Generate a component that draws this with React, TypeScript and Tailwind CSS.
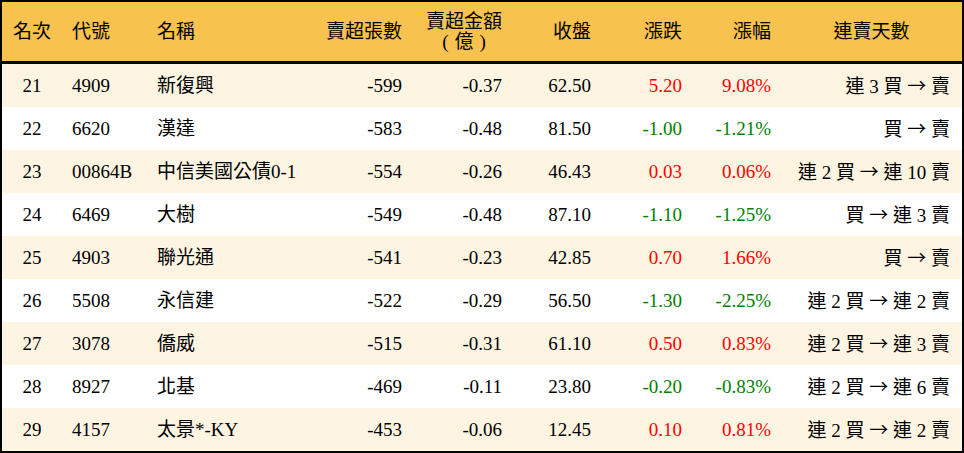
type Row = {
  rank: number;
  code: string;
  name: string;
  shares: string;
  amount: string;
  close: string;
  change: string;
  pct: string;
  streak: string;
};

const rows: Row[] = [
  { rank: 21, code: "4909", name: "新復興", shares: "-599", amount: "-0.37", close: "62.50", change: "5.20", pct: "9.08%", streak: "連 3 買 → 賣" },
  { rank: 22, code: "6620", name: "漢達", shares: "-583", amount: "-0.48", close: "81.50", change: "-1.00", pct: "-1.21%", streak: "買 → 賣" },
  { rank: 23, code: "00864B", name: "中信美國公債0-1", shares: "-554", amount: "-0.26", close: "46.43", change: "0.03", pct: "0.06%", streak: "連 2 買 → 連 10 賣" },
  { rank: 24, code: "6469", name: "大樹", shares: "-549", amount: "-0.48", close: "87.10", change: "-1.10", pct: "-1.25%", streak: "買 → 連 3 賣" },
  { rank: 25, code: "4903", name: "聯光通", shares: "-541", amount: "-0.23", close: "42.85", change: "0.70", pct: "1.66%", streak: "買 → 賣" },
  { rank: 26, code: "5508", name: "永信建", shares: "-522", amount: "-0.29", close: "56.50", change: "-1.30", pct: "-2.25%", streak: "連 2 買 → 連 2 賣" },
  { rank: 27, code: "3078", name: "僑威", shares: "-515", amount: "-0.31", close: "61.10", change: "0.50", pct: "0.83%", streak: "連 2 買 → 連 3 賣" },
  { rank: 28, code: "8927", name: "北基", shares: "-469", amount: "-0.11", close: "23.80", change: "-0.20", pct: "-0.83%", streak: "連 2 買 → 連 6 賣" },
  { rank: 29, code: "4157", name: "太景*-KY", shares: "-453", amount: "-0.06", close: "12.45", change: "0.10", pct: "0.81%", streak: "連 2 買 → 連 2 賣" },
];

const cols = "grid grid-cols-[60px_85px_165px_100px_100px_89px_91px_89px_1fr]";

// the arrow in the source is the wide CJK one
function Streak({ text }: { text: string }) {
  const [before, after] = text.split(" → ");
  return (
    <>
      {before}{" "}
      <span style={{ fontFamily: '"Noto Sans CJK TC", sans-serif' }}>→</span>{" "}
      {after}
    </>
  );
}

export default function App() {
  return (
    <div
      className="w-[964px] h-[453px] border-2 border-black bg-white text-black text-[19px] leading-none"
      style={{ fontFamily: '"Liberation Serif", "Noto Sans CJK TC", serif' }}
    >
      <div className={`${cols} h-[62px] items-center bg-[#f8c24f] border-b-[3px] border-black`}>
        <div className="text-center">名次</div>
        <div className="pl-[10px]">代號</div>
        <div className="pl-[10px]">名稱</div>
        <div className="pr-[10px] text-right">賣超張數</div>
        <div className="pr-[10px] flex justify-end">
          <div className="text-center leading-[20px]">
            賣超金額
            <br />
            <span className="inline-flex gap-[6px]">
              <span>(</span>
              <span>億</span>
              <span>)</span>
            </span>
          </div>
        </div>
        <div className="pr-[10px] text-right">收盤</div>
        <div className="pr-[10px] text-right">漲跌</div>
        <div className="pr-[10px] text-right">漲幅</div>
        <div className="text-center">連賣天數</div>
      </div>
      {rows.map((r, i) => {
        const up = !r.change.startsWith("-");
        const tone = up ? "text-[#ff0000]" : "text-[#008000]";
        return (
          <div
            key={r.rank}
            className={`${cols} h-[43px] items-center ${i % 2 === 0 ? "bg-[#fdf5e2]" : "bg-white"}`}
          >
            <div className="text-center">{r.rank}</div>
            <div className="pl-[10px]">{r.code}</div>
            <div className="pl-[10px] whitespace-nowrap">{r.name}</div>
            <div className="pr-[10px] text-right">{r.shares}</div>
            <div className="pr-[10px] text-right">{r.amount}</div>
            <div className="pr-[10px] text-right">{r.close}</div>
            <div className={`pr-[10px] text-right ${tone}`}>{r.change}</div>
            <div className={`pr-[10px] text-right ${tone}`}>{r.pct}</div>
            <div className="pr-[12px] text-right whitespace-nowrap">
              <Streak text={r.streak} />
            </div>
          </div>
        );
      })}
    </div>
  );
}
